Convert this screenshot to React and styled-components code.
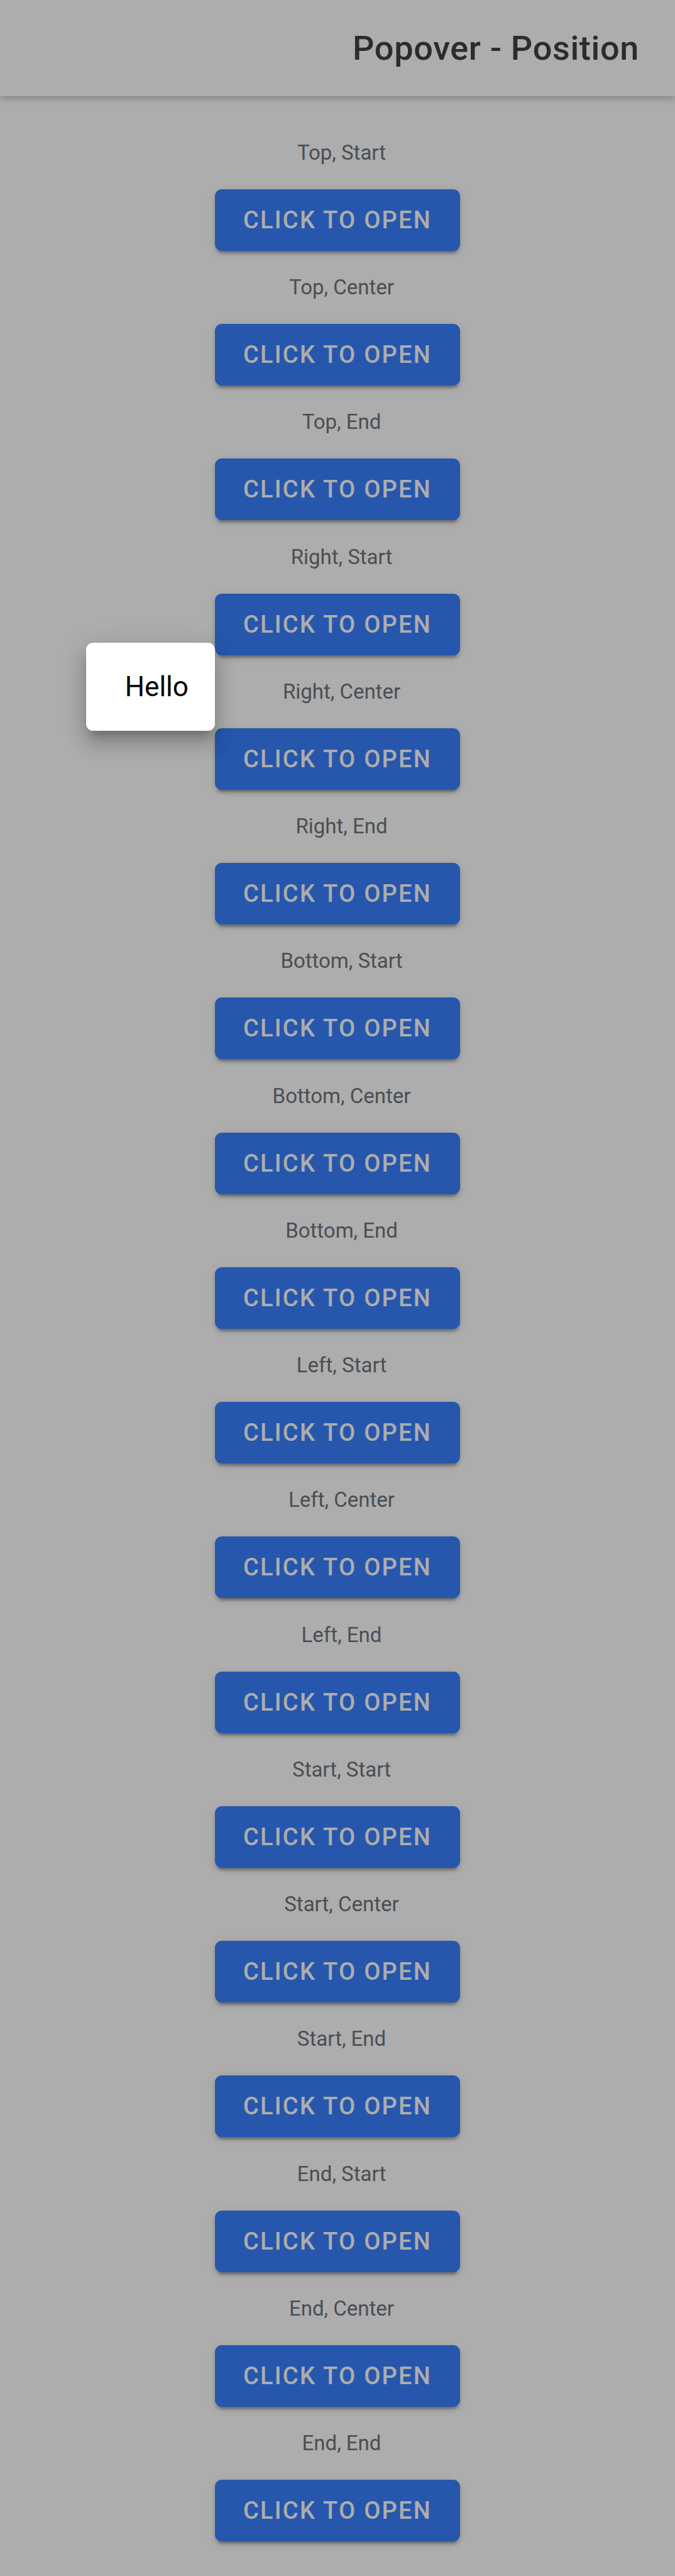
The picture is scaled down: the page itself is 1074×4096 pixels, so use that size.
import React from 'react';
import styled, { createGlobalStyle } from 'styled-components';

const GlobalStyle = createGlobalStyle`
  *, *::before, *::after { box-sizing: border-box; }
  body {
    margin: 0;
    background: #ffffff;
    font-family: Roboto, "Liberation Sans", sans-serif;
  }
`;

const Page = styled.div`
  display: flex;
  flex-direction: column;
  min-height: 100vh;
`;

const Header = styled.header`
  display: flex;
  align-items: center;
  justify-content: flex-end;
  min-height: 153px;
  padding: 0 57px;
  background: #ffffff;
  box-shadow: 0 4px 10px rgba(0, 0, 0, 0.24);
`;

const Title = styled.h1`
  margin: 0;
  color: #424242;
  font-size: 54px;
  font-weight: 500;
  line-height: 64px;
  letter-spacing: 0.0125em;
`;

const List = styled.main`
  flex: 1;
  display: flex;
  flex-direction: column;
  align-items: center;
  justify-content: space-between;
  gap: 38px;
  padding: 70px 57px 55px;
`;

const Item = styled.section`
  position: relative;
  display: flex;
  flex-direction: column;
  align-items: center;
  gap: 38px;
`;

const Label = styled.p`
  margin: 0;
  padding-left: 13px;
  color: #6c757d;
  font-size: 33px;
  line-height: 40px;
`;

const OpenButton = styled.button`
  height: 98px;
  padding: 0 45px;
  border: 0;
  border-radius: 11px;
  background: #3880ff;
  color: #ffffff;
  font-family: inherit;
  font-size: 38px;
  font-weight: 500;
  line-height: 44px;
  letter-spacing: 0.06em;
  text-transform: uppercase;
  box-shadow:
    0 8px 3px -5px rgba(0, 0, 0, 0.2),
    0 5px 5px rgba(0, 0, 0, 0.14),
    0 3px 14px rgba(0, 0, 0, 0.12);
`;

const Backdrop = styled.div`
  position: absolute;
  inset: 0;
  z-index: 1;
  background: rgba(0, 0, 0, 0.32);
`;

const Popover = styled.div`
  position: absolute;
  top: 156px;
  right: 100%;
  z-index: 2;
  padding: 44px 42px 44px 62px;
  border-radius: 11px;
  background: #ffffff;
  color: #000000;
  font-size: 44px;
  line-height: 52px;
  box-shadow:
    0 14px 14px -8px rgba(0, 0, 0, 0.2),
    0 22px 28px 3px rgba(0, 0, 0, 0.14),
    0 8px 38px 5px rgba(0, 0, 0, 0.12);
`;

const Root = styled.div`
  position: relative;
`;

const sides = ['Top', 'Right', 'Bottom', 'Left', 'Start', 'End'];
const alignments = ['Start', 'Center', 'End'];
const positions = sides.flatMap((side) => alignments.map((align) => `${side}, ${align}`));

export default function App() {
  const [active, setActive] = React.useState('Right, Start');

  return (
    <Root>
      <GlobalStyle />
      <Page>
        <Header>
          <Title>Popover - Position</Title>
        </Header>
        <List>
          {positions.map((position) => (
            <Item key={position}>
              <Label>{position}</Label>
              <OpenButton type="button" onClick={() => setActive(position)}>
                Click to open
              </OpenButton>
              {active === position && <Popover role="dialog">Hello</Popover>}
            </Item>
          ))}
        </List>
      </Page>
      {active && <Backdrop onClick={() => setActive(null)} />}
    </Root>
  );
}
